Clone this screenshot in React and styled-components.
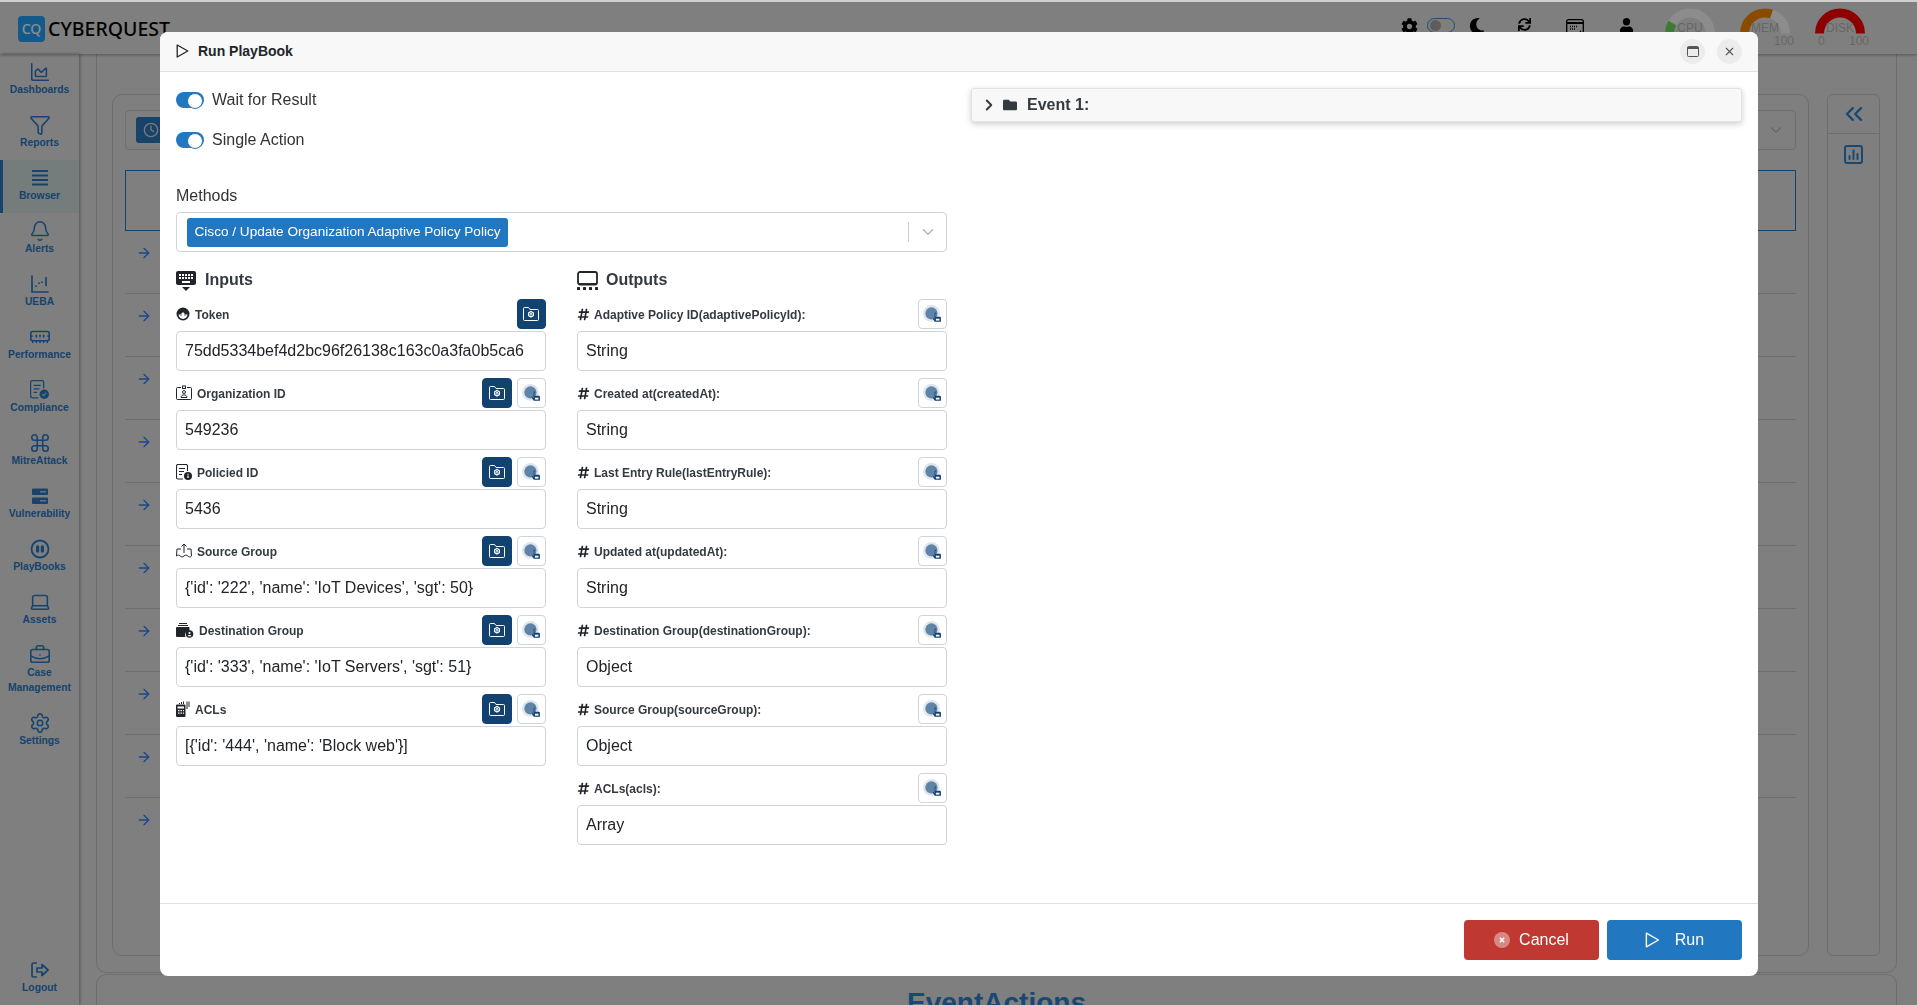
import React from "react";
import styled, { createGlobalStyle } from "styled-components";
import {
  Bell,
  BriefcaseBusiness,
  ChevronDown,
  ChevronRight,
  ChevronsLeft,
  ChartArea,
  Clock,
  Command,
  Filter,
  Laptop,
  ArrowRight,
  MemoryStick,
  Settings,
  X,
} from "lucide-react";
import { FaCog, FaFolder, FaHashtag, FaMoon, FaSync, FaUser } from "react-icons/fa";
import { MdKeyboardHide } from "react-icons/md";

const GlobalStyle = createGlobalStyle`
  html, body {
    margin: 0;
    height: 100%;
    overflow: hidden;
    background: #cfcfcf;
    font-family: "Liberation Sans", Arial, sans-serif;
  }
  * { box-sizing: border-box; }
`;

/* ---------- small drawn icons ---------- */

const PlayOutline = ({ size = 14, width = 1.3 }) => (
  <svg width={size} height={size} viewBox="0 0 14 14" fill="none" stroke="currentColor" strokeWidth={width} strokeLinejoin="round">
    <path d="M1.2 1v12l10.600-6z" />
  </svg>
);

const FolderCog = () => (
  <svg width="18" height="18" viewBox="0 0 18 18" fill="none" stroke="#fff" strokeWidth="1">
    <path d="M1.500 14.500v-11a1 1 0 0 1 1-1h4l1.500 2h7.500a1 1 0 0 1 1 1v9a1 1 0 0 1-1 1h-13a1 1 0 0 1-1-1z" />
    <path d="M9 6.400l2.400 1.400v2.800L9 12l-2.400-1.400V7.800z" strokeWidth="1.100" />
    <circle cx="9" cy="9.200" r="1" />
  </svg>
);

const TapIcon = () => (
  <svg width="21" height="21" viewBox="0 0 20 20">
    <circle cx="9" cy="9" r="8" fill="#dfe5ec" />
    <circle cx="9" cy="9" r="5.800" fill="#5f84a8" />
    <path d="M12.600 9v3.200h4.400a1 1 0 0 1 1 1V17h-5.800l-2-3 1-.6.800.8V9a.8.800 0 0 1 1.600 0z" fill="#123f6b" />
    <rect x="13.200" y="14" width="3.400" height="1.800" fill="#fff" />
  </svg>
);

const TokenIcon = () => (
  <svg width="14" height="14" viewBox="0 0 14 14">
    <circle cx="7" cy="7" r="6.500" fill="#212529" />
    <path d="M2.500 7.500c1.800 0 3-.8 4.500-2.600 1 1.600 2.600 2.600 4.500 2.600-.2 2.600-2.200 4.400-4.500 4.400s-4.300-1.800-4.500-4.400z" fill="#fff" />
    <circle cx="5" cy="8" r=".7" fill="#212529" />
    <circle cx="9" cy="8" r=".7" fill="#212529" />
  </svg>
);

const OrgIcon = () => (
  <svg width="16" height="16" viewBox="0 0 16 16" fill="none" stroke="#212529" strokeWidth="1">
    <path d="M5 2.500H1.500a1 1 0 0 0-1 1v10a1 1 0 0 0 1 1h13a1 1 0 0 0 1-1v-10a1 1 0 0 0-1-1H11" />
    <rect x="6.500" y="1" width="3" height="2.500" />
    <circle cx="8" cy="7" r="1.500" />
    <path d="M5 12.500c0-3.500 6-3.500 6 0z" />
  </svg>
);

const PolicyIcon = ({ color = "#212529", badge = "i", fill = "#212529", size = 16 }) => (
  <svg width={size} height={size} viewBox="0 0 16 16" fill="none" stroke={color} strokeWidth="1.100">
    <path d="M11.500 7V2a1.500 1.500 0 0 0-1.500-1.500H2A1.500 1.500 0 0 0 .5 2v11.500A1.500 1.500 0 0 0 2 15h5" />
    <path d="M3 4.500h6M3 7.500h5M3 10.500h3" />
    <circle cx="12" cy="12" r="4" fill={fill} stroke="none" />
    {badge === "i" ? (
      <path d="M12 11.500v2.600M12 9.800v.9" stroke="#fff" strokeWidth="1.200" />
    ) : (
      <path d="M10.300 12l1.200 1.200 2.200-2.300" stroke="#ccc" strokeWidth="1" />
    )}
  </svg>
);

const SourceIcon = () => (
  <svg width="16" height="16" viewBox="0 0 16 16" fill="none" stroke="#212529" strokeWidth="1">
    <path d="M8 10V1M5.500 3.500L8 1l2.500 2.500" />
    <path d="M5 6H1l-.5 7M11 6h4l.5 7" />
    <path d="M.5 13c1.200-1.200 2.500-1.200 3.700 0s2.500 1.200 3.800 0 2.500-1.200 3.800 0 2.500 1.200 3.700 0" />
  </svg>
);

const DestIcon = () => (
  <svg width="18" height="16" viewBox="0 0 18 16">
    <path d="M3 1h8v1H3zM2 3h10v1H2z" fill="#212529" />
    <path d="M1 5h11.500a1 1 0 0 1 1 1v3a4 4 0 0 0-4 6H1a1 1 0 0 1-1-1V6a1 1 0 0 1 1-1z" fill="#212529" />
    <circle cx="13.500" cy="12" r="3.800" fill="#212529" />
    <circle cx="13.500" cy="11" r="1.100" fill="#fff" />
    <path d="M11.500 14.200c.5-1.600 3.500-1.600 4 0z" fill="#fff" />
  </svg>
);

const AclIcon = () => (
  <svg width="14" height="16" viewBox="0 0 14 16" fill="#212529">
    <path d="M1 3.500h7.500a1 1 0 0 1 1 1V15a1 1 0 0 1-1 1H1a1 1 0 0 1-1-1V4.500a1 1 0 0 1 1-1z" />
    <path d="M1.500 5.500h6.500v2H1.500zM2 9h1.500v1.200H2zM4.500 9H6v1.200H4.500zM7 9h1v1.200H7zM2 11.500h1.500v1.200H2zM4.500 11.500H6v1.200H4.500zM7 11.500h1v1.200H7z" fill="#fff" />
    <path d="M3 2h1v1H3zM5 1h1v2H5zM7 .5h1V3H7zM10.500 .5h1V8h-1zM12.500 .5h1V6h-1z" />
  </svg>
);

const OutputsIcon = () => (
  <svg width="21" height="19" viewBox="0 0 21 19" fill="none">
    <rect x="1" y="1" width="19" height="12.500" rx="2" stroke="#212529" strokeWidth="1.800" />
    <path d="M1 12.600h19" stroke="#212529" strokeWidth="1" />
    <g fill="#212529">
      <rect x="0" y="16" width="3" height="3" rx=".6" />
      <rect x="6" y="16" width="3" height="3" rx=".6" />
      <rect x="12" y="16" width="3" height="3" rx=".6" />
      <rect x="18" y="16" width="3" height="3" rx=".6" />
    </g>
  </svg>
);

const RestoreIcon = () => (
  <svg width="12" height="11" viewBox="0 0 12 11" fill="none" stroke="#555">
    <rect x=".5" y=".5" width="11" height="10" rx="1" />
    <path d="M.5 2h11" strokeWidth="2" />
  </svg>
);

const CancelIcon = () => (
  <CancelDot>
    <svg width="6" height="6" viewBox="0 0 6 6" stroke="#fff" strokeWidth="1.500">
      <path d="M.8.8l4.400 4.400M5.200.8L.8 5.200" />
    </svg>
  </CancelDot>
);

const BarsIcon = () => (
  <svg width="18" height="17" viewBox="0 0 18 17" fill="currentColor">
    <rect x="1" y="1" width="16" height="2" />
    <rect x="1" y="5.500" width="16" height="2" />
    <rect x="1" y="10" width="16" height="2" />
    <rect x="1" y="14.500" width="16" height="2" />
  </svg>
);

const ScatterIcon = () => (
  <svg width="20" height="20" viewBox="0 0 20 20" fill="none" stroke="currentColor" strokeWidth="1.700">
    <path d="M2 2v16h16" strokeLinecap="round" />
    <path d="M6 13v-1.500M9 10V8.500M12 9V7.500M16 12V3" />
  </svg>
);

const ServerIcon = () => (
  <svg width="20" height="20" viewBox="0 0 20 20" fill="currentColor">
    <path d="M3 2.500h14a1 1 0 0 1 1 1V8a1 1 0 0 1-1 1H3a1 1 0 0 1-1-1V3.500a1 1 0 0 1 1-1zm0 9h14a1 1 0 0 1 1 1V17a1 1 0 0 1-1 1H3a1 1 0 0 1-1-1v-4.500a1 1 0 0 1 1-1z" />
    <rect x="10" y="5" width="6" height="1.500" fill="#cdcdcd" />
    <rect x="10" y="14" width="6" height="1.500" fill="#cdcdcd" />
  </svg>
);

const PlaybookIcon = () => (
  <svg width="20" height="20" viewBox="0 0 20 20" fill="none" stroke="currentColor" strokeWidth="1.800">
    <circle cx="10" cy="10" r="8.500" />
    <rect x="6" y="6.500" width="3.200" height="7" rx="1" fill="currentColor" stroke="none" />
    <rect x="10.800" y="6.500" width="3.200" height="7" rx="1" fill="currentColor" stroke="none" />
  </svg>
);

const LogoutIcon = () => (
  <svg width="20" height="20" viewBox="0 0 20 20" fill="none" stroke="currentColor" strokeWidth="1.700" strokeLinejoin="round">
    <path d="M7 3H3.500a1.500 1.500 0 0 0-1.500 1.500v11A1.500 1.500 0 0 0 3.500 17H7" />
    <path d="M7 8h5V4.500l6 5.500-6 5.500V12H7z" />
  </svg>
);

const CalendarIcon = () => (
  <svg width="18" height="18" viewBox="0 0 18 18" fill="none" stroke="#000" strokeWidth="1.300">
    <rect x=".7" y="1.700" width="16.600" height="14.600" rx="2" />
    <path d="M.7 5h16.600" strokeWidth="2" />
    <path d="M4 8.500h8M4 11h6" strokeDasharray="1 1" />
    <path d="M12 17l2.500-5 2.500 5z" fill="#000" stroke="none" />
  </svg>
);

const BoxedChart = () => (
  <svg width="19" height="19" viewBox="0 0 19 19" fill="none" stroke="currentColor" strokeWidth="2" strokeLinecap="round">
    <rect x="1" y="1" width="17" height="17" rx="2" />
    <path d="M5.500 14v-3M9.500 14V5.500M13.500 14V9" />
  </svg>
);

/* half doughnut, value is 0..100 */
const Gauge = ({ label, value, color, showScale }) => {
  const r = 20.5;
  const circ = Math.PI * r;
  return (
    <GaugeBox>
      <svg width="50" height="26" viewBox="0 0 50 26" fill="none">
        <path d="M4.500 25.500a20.500 20.500 0 0 1 41 0" stroke="#fff" strokeWidth="9" />
        <path
          d="M4.500 25.500a20.500 20.500 0 0 1 41 0"
          stroke={color}
          strokeWidth="9"
          strokeDasharray={`${(circ * value) / 100} ${circ}`}
        />
      </svg>
      <GaugeLabel>{label}</GaugeLabel>
      {showScale && (
        <GaugeScale>
          <span>0</span>
          <span>100</span>
        </GaugeScale>
      )}
    </GaugeBox>
  );
};

/* ---------- data ---------- */

const navIcon = { size: 22, strokeWidth: 1.7 };

const navItems = [
  { label: "Dashboards", icon: <ChartArea {...navIcon} /> },
  { label: "Reports", icon: <Filter {...navIcon} /> },
  { label: "Browser", icon: <BarsIcon />, active: true },
  { label: "Alerts", icon: <Bell {...navIcon} /> },
  { label: "UEBA", icon: <ScatterIcon /> },
  { label: "Performance", icon: <MemoryStick {...navIcon} /> },
  { label: "Compliance", icon: <PolicyIcon color="currentColor" badge="c" fill="currentColor" size={19} /> },
  { label: "MitreAttack", icon: <Command {...navIcon} /> },
  { label: "Vulnerability", icon: <ServerIcon /> },
  { label: "PlayBooks", icon: <PlaybookIcon /> },
  { label: "Assets", icon: <Laptop {...navIcon} /> },
  { label: "Case Management", icon: <BriefcaseBusiness {...navIcon} /> },
  { label: "Settings", icon: <Settings {...navIcon} /> },
];

const inputs = [
  { label: "Token", icon: <TokenIcon />, value: "75dd5334bef4d2bc96f26138c163c0a3fa0b5ca6", noTap: true },
  { label: "Organization ID", icon: <OrgIcon />, value: "549236" },
  { label: "Policied ID", icon: <PolicyIcon />, value: "5436" },
  { label: "Source Group", icon: <SourceIcon />, value: "{'id': '222', 'name': 'IoT Devices', 'sgt': 50}" },
  { label: "Destination Group", icon: <DestIcon />, value: "{'id': '333', 'name': 'IoT Servers', 'sgt': 51}" },
  { label: "ACLs", icon: <AclIcon />, value: "[{'id': '444', 'name': 'Block web'}]" },
];

const outputs = [
  { label: "Adaptive Policy ID(adaptivePolicyId):", value: "String" },
  { label: "Created at(createdAt):", value: "String" },
  { label: "Last Entry Rule(lastEntryRule):", value: "String" },
  { label: "Updated at(updatedAt):", value: "String" },
  { label: "Destination Group(destinationGroup):", value: "Object" },
  { label: "Source Group(sourceGroup):", value: "Object" },
  { label: "ACLs(acls):", value: "Array" },
];

const App = () => (
  <>
    <GlobalStyle />
    <Page>
      <TopBar>
        <Logo>
          <LogoMark>CQ</LogoMark>
          <LogoText>CYBERQUEST</LogoText>
        </Logo>
        <TopTools>
          <FaCog size={17} />
          <ThemeSwitch />
          <MoonSlot>
            <FaMoon size={16} />
          </MoonSlot>
          <ToolSlot>
            <FaSync size={13} />
          </ToolSlot>
          <ToolSlot>
            <CalendarIcon />
          </ToolSlot>
          <ToolSlot>
            <FaUser size={15} />
          </ToolSlot>
          <Gauges>
            <Gauge label="CPU" value={17} color="#73de5d" />
            <Gauge label="MEM" value={60} color="#fb8800" showScale />
            <Gauge label="DISK" value={100} color="#ff0000" showScale />
          </Gauges>
        </TopTools>
      </TopBar>

      <Columns>
        <Sidebar>
          {navItems.map((item) => (
            <NavItem key={item.label} $active={item.active}>
              <NavIcon>{item.icon}</NavIcon>
              <NavLabel>{item.label}</NavLabel>
            </NavItem>
          ))}
          <LogoutItem>
            <NavIcon>
              <LogoutIcon />
            </NavIcon>
            <NavLabel>Logout</NavLabel>
          </LogoutItem>
        </Sidebar>

        <Main>
          <OuterPanel>
            <ResultCard>
              <FilterBar>
                <ClockButton>
                  <Clock size={16} />
                </ClockButton>
                <ChevronDown size={18} color="#bdbdbd" />
              </FilterBar>
              <QueryBox />
              {Array.from({ length: 10 }).map((_, i) => (
                <ResultRow key={i}>
                  <ArrowRight size={16} />
                </ResultRow>
              ))}
            </ResultCard>
            <SideRail>
              <RailButton>
                <ChevronsLeft size={28} />
              </RailButton>
              <RailButton>
                <BoxedChart />
              </RailButton>
            </SideRail>
          </OuterPanel>
          <ActionsPanel>
            <ActionsTitle>EventActions</ActionsTitle>
          </ActionsPanel>
        </Main>
      </Columns>
    </Page>

    <Backdrop />

    <Modal>
      <ModalHeader>
        <PlayOutline size={14} />
        <ModalTitle>Run PlayBook</ModalTitle>
        <HeaderButtons>
          <RoundButton>
            <RestoreIcon />
          </RoundButton>
          <RoundButton>
            <X size={13} color="#555" />
          </RoundButton>
        </HeaderButtons>
      </ModalHeader>

      <ModalBody>
        <LeftColumn>
          <ToggleRow>
            <Toggle />
            Wait for Result
          </ToggleRow>
          <ToggleRow>
            <Toggle />
            Single Action
          </ToggleRow>
          <MethodsLabel>Methods</MethodsLabel>
          <SelectBox>
            <Chip>Cisco / Update Organization Adaptive Policy Policy</Chip>
            <SelectEnd>
              <ChevronDown size={18} color="#b5b5b5" />
            </SelectEnd>
          </SelectBox>
          <Params>
            <div>
              <SectionTitle>
                <KeyboardIcon size={24} />
                Inputs
              </SectionTitle>
              {inputs.map((f) => (
                <Field key={f.label}>
                  <FieldHead>
                    {f.icon}
                    <FieldLabel>{f.label}</FieldLabel>
                    <FieldActions>
                      <SquareButton $filled>
                        <FolderCog />
                      </SquareButton>
                      {!f.noTap && (
                        <SquareButton>
                          <TapIcon />
                        </SquareButton>
                      )}
                    </FieldActions>
                  </FieldHead>
                  <TextInput readOnly value={f.value} />
                </Field>
              ))}
            </div>
            <div>
              <SectionTitle>
                <OutputsIcon />
                Outputs
              </SectionTitle>
              {outputs.map((f) => (
                <Field key={f.label}>
                  <FieldHead>
                    <HashIcon size={13} />
                    <FieldLabel>{f.label}</FieldLabel>
                    <FieldActions>
                      <SquareButton>
                        <TapIcon />
                      </SquareButton>
                    </FieldActions>
                  </FieldHead>
                  <TextInput readOnly value={f.value} />
                </Field>
              ))}
            </div>
          </Params>
        </LeftColumn>

        <RightColumn>
          <EventHeader>
            <ChevronRight size={18} strokeWidth={2.6} />
            <FolderIcon size={14} />
            Event 1:
          </EventHeader>
        </RightColumn>
      </ModalBody>

      <ModalFooter>
        <FooterButton $color="#bf3832">
          <CancelIcon />
          Cancel
        </FooterButton>
        <FooterButton $color="#2178c0" $gap={14}>
          <PlayOutline size={16} width={1.2} />
          Run
        </FooterButton>
      </ModalFooter>
    </Modal>
  </>
);

/* ---------- page behind the dialog ---------- */

const Page = styled.div`
  height: 1003px;
  margin-top: 2px;
  background: #e8e8e8;
  display: flex;
  flex-direction: column;
  overflow: hidden;
`;

const TopBar = styled.header`
  height: 52px;
  flex-shrink: 0;
  display: flex;
  align-items: flex-start;
  justify-content: space-between;
  padding-left: 18px;
  box-shadow: 0 1px 3px rgba(0, 0, 0, 0.35);
  position: relative;
  z-index: 1;
`;

const Logo = styled.div`
  display: flex;
  align-items: center;
  gap: 3px;
  margin-top: 13px;
`;

const LogoMark = styled.div`
  width: 27px;
  height: 26px;
  border-radius: 4px;
  background: #21a5ff;
  color: #fff;
  font: 500 14px "Noto Sans", sans-serif;
  display: flex;
  align-items: center;
  justify-content: center;
`;

const LogoText = styled.span`
  font: 500 19.5px "Noto Sans", sans-serif;
  color: #000;
`;

const TopTools = styled.div`
  display: flex;
  align-items: flex-start;
  padding-top: 16px;
  padding-right: 52px;
  color: #000;
`;

const ThemeSwitch = styled.div`
  width: 28px;
  height: 15px;
  margin-left: 9px;
  border: 1px solid #2f8fe0;
  border-radius: 8px;
  position: relative;
  &::before {
    content: "";
    position: absolute;
    left: 2px;
    top: 1px;
    width: 11px;
    height: 11px;
    border-radius: 50%;
    background: #aaa;
  }
`;

const MoonSlot = styled.span`
  margin: 0 13px 0 14px;
  width: 16px;
`;

const ToolSlot = styled.span`
  width: 50px;
  display: flex;
  justify-content: center;
  margin-left: 1px;
`;

const Gauges = styled.div`
  display: flex;
  gap: 25px;
  margin-left: 14px;
  margin-top: -10px;
`;

const GaugeBox = styled.div`
  width: 50px;
  position: relative;
  height: 44px;
`;

const GaugeLabel = styled.span`
  position: absolute;
  left: 0;
  right: 0;
  top: 13px;
  text-align: center;
  font-size: 12px;
  color: #bbb;
`;

const GaugeScale = styled.div`
  position: absolute;
  left: 3px;
  right: -4px;
  top: 26px;
  display: flex;
  justify-content: space-between;
  font-size: 12px;
  color: #bbb;
`;

const Columns = styled.div`
  flex: 1;
  min-height: 0;
  display: flex;
`;

const Sidebar = styled.nav`
  width: 79px;
  flex-shrink: 0;
  display: flex;
  flex-direction: column;
  color: #2a7ac8;
  box-shadow: 1px 0 3px rgba(0, 0, 0, 0.35);
`;

const NavItem = styled.div`
  padding: 7px 2px 10px;
  display: flex;
  flex-direction: column;
  align-items: center;
  text-align: center;
  background: ${(p) => (p.$active ? "#d6e2e2" : "transparent")};
  box-shadow: ${(p) => (p.$active ? "inset 3px 0 0 #2a7ac8" : "none")};
`;

const LogoutItem = styled(NavItem)`
  margin-top: auto;
`;

const NavIcon = styled.div`
  height: 21px;
  display: flex;
  align-items: center;
  justify-content: center;
`;

const NavLabel = styled.div`
  font-size: 10.3px;
  font-weight: 700;
  line-height: 15px;
`;

const Main = styled.main`
  flex: 1;
  min-width: 0;
  padding: 0 20px 0 17px;
`;

const OuterPanel = styled.section`
  height: 919px;
  border: 1px solid #c8c8c8;
  border-top: 0;
  border-radius: 0 0 10px 10px;
  padding: 40px 16px 16px 15px;
  display: flex;
  gap: 18px;
`;

const ResultCard = styled.div`
  flex: 1;
  border: 1px solid #c8c8c8;
  border-radius: 10px;
  padding: 15px 12px;
  overflow: hidden;
`;

const FilterBar = styled.div`
  height: 40px;
  border: 1px solid #c8c8c8;
  border-radius: 4px;
  display: flex;
  align-items: center;
  justify-content: space-between;
  padding: 0 10px;
`;

const ClockButton = styled.div`
  width: 40px;
  height: 26px;
  border-radius: 3px;
  background: #2a78c0;
  color: #ddd;
  display: flex;
  align-items: center;
  padding-left: 7px;
`;

const QueryBox = styled.div`
  height: 61px;
  margin-top: 20px;
  border: 1px solid #2a78c0;
`;

const ResultRow = styled.div`
  height: 63px;
  padding: 14px 0 0 11px;
  color: #3181ff;
  border-bottom: 1px solid #c8c8c8;
  &:last-child {
    border-bottom: 0;
  }
`;

const SideRail = styled.aside`
  width: 53px;
  border: 1px solid #c8c8c8;
  border-radius: 6px;
`;

const RailButton = styled.div`
  height: 39px;
  display: flex;
  align-items: center;
  justify-content: center;
  color: #2f83d2;
  border-bottom: 1px solid #c8c8c8;
  &:last-child {
    border-bottom: 0;
    height: 41px;
  }
`;

const ActionsPanel = styled.section`
  height: 60px;
  margin-top: 1px;
  border: 1px solid #c8c8c8;
  border-radius: 10px 10px 0 0;
  text-align: center;
`;

const ActionsTitle = styled.h2`
  margin: 12px 0 0;
  font-size: 28px;
  line-height: 32px;
  color: #2f83d2;
`;

const Backdrop = styled.div`
  position: fixed;
  inset: 2px 0 0;
  z-index: 10;
  background: rgba(0, 0, 0, 0.45);
`;

/* ---------- dialog ---------- */

const CancelDot = styled.span`
  width: 16px;
  height: 16px;
  border-radius: 50%;
  background: rgba(255, 255, 255, 0.4);
  display: inline-flex;
  align-items: center;
  justify-content: center;
`;

const Modal = styled.div`
  position: fixed;
  z-index: 11;
  left: 160px;
  top: 32px;
  width: 1598px;
  height: 944px;
  background: #fff;
  border-radius: 8px;
  overflow: hidden;
  display: flex;
  flex-direction: column;
  color: #212529;
`;

const ModalHeader = styled.div`
  height: 40px;
  flex-shrink: 0;
  background: #f8f8f8;
  border-bottom: 1px solid #dee2e6;
  display: flex;
  align-items: center;
  padding: 0 16px 1px;
  color: #212529;
`;

const ModalTitle = styled.span`
  margin-left: 8px;
  font-size: 14px;
  font-weight: 700;
`;

const HeaderButtons = styled.div`
  margin-left: auto;
  display: flex;
  gap: 12px;
`;

const RoundButton = styled.div`
  width: 25px;
  height: 25px;
  border-radius: 50%;
  background: #ececec;
  display: flex;
  align-items: center;
  justify-content: center;
`;

const ModalBody = styled.div`
  flex: 1;
  min-height: 0;
  display: grid;
  grid-template-columns: 771px 771px;
  column-gap: 24px;
  padding: 8px 16px 0;
`;

const LeftColumn = styled.div`
  display: flex;
  flex-direction: column;
`;

const RightColumn = styled.div`
  padding-top: 8px;
`;

const ToggleRow = styled.div`
  height: 40px;
  display: flex;
  align-items: center;
  gap: 8px;
  font-size: 16px;
  color: #333;
`;

const Toggle = styled.span`
  width: 28px;
  height: 16px;
  border-radius: 8px;
  background: #2178c0;
  position: relative;
  &::after {
    content: "";
    position: absolute;
    right: 1px;
    top: 1px;
    width: 14px;
    height: 14px;
    border-radius: 50%;
    background: #fff;
    border: 1px solid #2178c0;
  }
`;

const MethodsLabel = styled.div`
  margin-top: 26px;
  font-size: 16px;
  line-height: 20px;
  color: #333;
`;

const SelectBox = styled.div`
  margin-top: 6px;
  height: 40px;
  border: 1px solid #ced4da;
  border-radius: 4px;
  display: flex;
  align-items: center;
  padding-left: 10px;
`;

const Chip = styled.span`
  height: 29px;
  padding: 0 7.5px 1px;
  display: flex;
  align-items: center;
  border-radius: 3px;
  background: #2178c0;
  color: #fff;
  font-size: 13.6px;
`;

const SelectEnd = styled.div`
  margin-left: auto;
  width: 38px;
  height: 20px;
  border-left: 1px solid #ccc;
  display: flex;
  align-items: center;
  justify-content: center;
`;

const Params = styled.div`
  display: grid;
  grid-template-columns: 370px 370px;
  column-gap: 31px;
  margin-top: 15px;
`;

const SectionTitle = styled.h3`
  margin: 0 0 6px;
  height: 26px;
  display: flex;
  align-items: center;
  gap: 8px;
  font-size: 16px;
  font-weight: 700;
  color: #343a40;
`;

const KeyboardIcon = styled(MdKeyboardHide)`
  margin: 0 -1px 0 -2px;
  color: #212529;
`;

const HashIcon = styled(FaHashtag)`
  margin-right: -1px;
  color: #212529;
`;

const FolderIcon = styled(FaFolder)`
  margin: 0 6px 0 1px;
`;

const Field = styled.div`
  margin-bottom: 7px;
`;

const FieldHead = styled.div`
  height: 30px;
  margin-bottom: 2px;
  display: flex;
  align-items: center;
  gap: 5px;
`;

const FieldLabel = styled.label`
  padding-top: 1px;
  font-size: 12px;
  font-weight: 700;
  color: #343a40;
`;

const FieldActions = styled.div`
  margin-left: auto;
  display: flex;
  gap: 5px;
`;

const SquareButton = styled.div`
  width: 29.5px;
  height: 30px;
  border-radius: 4px;
  display: flex;
  align-items: center;
  justify-content: center;
  background: ${(p) => (p.$filled ? "#124370" : "#fff")};
  border: 1px solid ${(p) => (p.$filled ? "#124370" : "#ced4da")};
`;

const TextInput = styled.input`
  display: block;
  width: 100%;
  height: 40px;
  padding: 0 8px;
  border: 1px solid #ced4da;
  border-radius: 4px;
  outline: none;
  background: #fff;
  color: #212529;
  font: 16px "Liberation Sans", Arial, sans-serif;
`;

const EventHeader = styled.div`
  height: 34px;
  display: flex;
  align-items: center;
  gap: 4px;
  padding-left: 8px;
  background: #f8f8f8;
  border: 1px solid #e3e3e3;
  border-radius: 3px;
  box-shadow: 0 2px 6px rgba(0, 0, 0, 0.2);
  font-size: 16px;
  font-weight: 700;
  color: #343a40;
`;

const ModalFooter = styled.div`
  height: 73px;
  flex-shrink: 0;
  border-top: 1px solid #dee2e6;
  display: flex;
  justify-content: flex-end;
  align-items: center;
  gap: 8px;
  padding: 0 16px;
`;

const FooterButton = styled.div`
  width: 135px;
  height: 40px;
  border-radius: 4px;
  background: ${(p) => p.$color};
  color: #fff;
  font-size: 16px;
  display: flex;
  align-items: center;
  justify-content: center;
  gap: ${(p) => p.$gap || 9}px;
`;

export default App;
